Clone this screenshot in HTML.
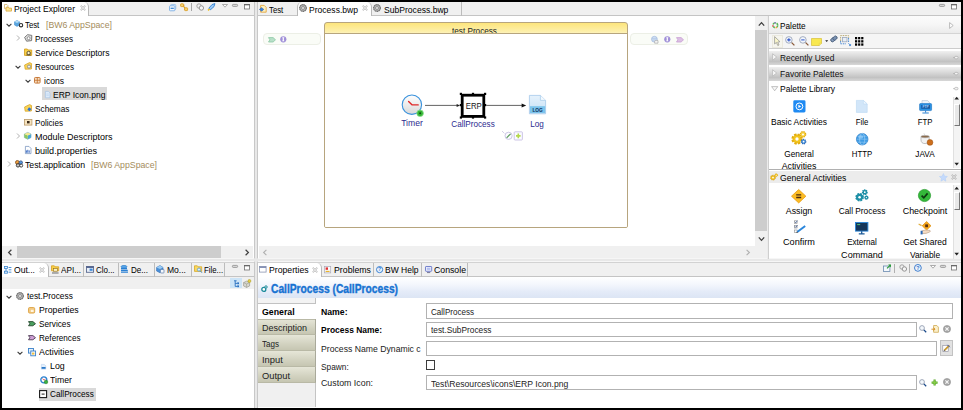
<!DOCTYPE html>
<html><head><meta charset="utf-8"><title>Process.bwp</title>
<style>
html,body{margin:0;padding:0}
body{width:963px;height:410px;overflow:hidden;background:#000;position:relative;font-family:'Liberation Sans',sans-serif;}
#app{position:absolute;left:2px;top:2px;width:959px;height:406px;background:#e8e8e8;overflow:hidden}
#root{position:absolute;left:-2px;top:-2px;width:963px;height:410px}
.b{position:absolute;box-sizing:border-box}
.t{position:absolute;white-space:nowrap;line-height:12px;height:12px;font-size:9.5px}
svg{position:absolute;overflow:visible}
.tabbar{background:#f0f0f0;border-bottom:1px solid #c4c4c4}
.tab{background:#fff;border-right:1px solid #b8b8b8;border-top-right-radius:5px}
.sep{background:#bcbcbc;width:1px}
.fld{background:#fff;border:1px solid #b2b2b2}
.sel{background:#d9d9d9}
.sb{background:#f0f0f0}
.th{background:#cdcdcd}
.stab{left:258px;width:58px;height:16px;border-bottom:1px solid #b9b9a6;border-right:1px solid #a9a99a;background:linear-gradient(#e6e6d8,#d2d2c0 60%,#c6c6b2)}
</style></head><body><div id="app"><div id="root">
<div class="b " style="left:2px;top:2px;width:253.00px;height:257.00px;background:#fff;border-right:1px solid #c8c8c8;border-bottom:1px solid #f6f6f6"></div>
<div class="b tabbar" style="left:2px;top:2px;width:252.00px;height:14.00px;"></div>
<div class="b tab" style="left:2px;top:2px;width:87.00px;height:14.00px;"></div>
<div class="b sb" style="left:2px;top:246px;width:251.00px;height:12.00px;"></div>
<div class="b th" style="left:17px;top:246px;width:204.00px;height:12.00px;"></div>
<div class="b " style="left:2px;top:261px;width:253.00px;height:147.00px;background:#fff;border-right:1px solid #c8c8c8;border-top:1px solid #f6f6f6"></div>
<div class="b " style="left:2px;top:262px;width:252.00px;height:1.00px;background:#d2d2d2"></div>
<div class="b tabbar" style="left:2px;top:263px;width:252.00px;height:14.00px;"></div>
<div class="b tab" style="left:2px;top:263px;width:47.00px;height:14.00px;"></div>
<div class="b sep" style="left:82.6px;top:263px;width:1.00px;height:13.50px;"></div>
<div class="b sep" style="left:118.1px;top:263px;width:1.00px;height:13.50px;"></div>
<div class="b sep" style="left:154px;top:263px;width:1.00px;height:13.50px;"></div>
<div class="b sep" style="left:191px;top:263px;width:1.00px;height:13.50px;"></div>
<div class="b sep" style="left:224.2px;top:263px;width:1.00px;height:13.50px;"></div>
<div class="b " style="left:2px;top:277px;width:252.00px;height:11.50px;background:#f0f0f0"></div>
<div class="b " style="left:230px;top:278px;width:11.50px;height:10.00px;background:#cce4f7"></div>
<div class="b " style="left:257px;top:2px;width:704.00px;height:257.00px;background:#fff;border-left:1px solid #c8c8c8;border-bottom:1px solid #f6f6f6"></div>
<div class="b tabbar" style="left:258px;top:2px;width:703.00px;height:14.00px;"></div>
<div class="b tab" style="left:297px;top:2px;width:75.00px;height:14.00px;border-left:1px solid #b8b8b8;border-top-left-radius:5px"></div>
<div class="b sep" style="left:460.9px;top:2px;width:1.00px;height:13.50px;"></div>
<div class="b sb" style="left:755px;top:16px;width:12.00px;height:230.00px;"></div>
<div class="b th" style="left:755px;top:30px;width:12.00px;height:200.60px;"></div>
<div class="b sb" style="left:259px;top:246px;width:508.00px;height:12.00px;"></div>
<div class="b " style="left:767px;top:16px;width:2.00px;height:243.00px;background:#ececec;border-right:1px solid #cfcfcf"></div>
<div class="b " style="left:257px;top:261px;width:704.00px;height:147.00px;background:#fff;border-left:1px solid #c8c8c8;border-top:1px solid #f6f6f6"></div>
<div class="b " style="left:258px;top:262px;width:703.00px;height:1.00px;background:#d2d2d2"></div>
<div class="b tabbar" style="left:258px;top:263px;width:703.00px;height:13.50px;"></div>
<div class="b tab" style="left:258px;top:263px;width:64.00px;height:13.50px;"></div>
<div class="b sep" style="left:372.6px;top:263px;width:1.00px;height:13.50px;"></div>
<div class="b sep" style="left:420.9px;top:263px;width:1.00px;height:13.50px;"></div>
<div class="b sep" style="left:466.8px;top:263px;width:1.00px;height:13.50px;"></div>
<div class="b " style="left:258px;top:277px;width:703.00px;height:21.00px;background:linear-gradient(#ffffff,#f4f7fd 35%,#e4ebf8 70%,#dce5f4)"></div>
<span class="t" style="top:3.30px;font-size:9.5px;color:#000;left:14.00px;transform:scaleX(0.9025);transform-origin:0 50%;">Project Explorer</span>
<div class="b sel" style="left:41.8px;top:87.2px;width:65.10px;height:13.00px;"></div>
<span class="t" style="top:18.70px;font-size:9.5px;color:#000;left:25.30px;transform:scaleX(0.8200);transform-origin:0 50%;">Test</span>
<span class="t" style="top:32.70px;font-size:9.5px;color:#000;left:34.70px;transform:scaleX(0.8566);transform-origin:0 50%;">Processes</span>
<span class="t" style="top:46.70px;font-size:9.5px;color:#000;left:34.70px;transform:scaleX(0.9046);transform-origin:0 50%;">Service Descriptors</span>
<span class="t" style="top:60.70px;font-size:9.5px;color:#000;left:34.70px;transform:scaleX(0.8586);transform-origin:0 50%;">Resources</span>
<span class="t" style="top:74.70px;font-size:9.5px;color:#000;left:44.00px;transform:scaleX(0.9014);transform-origin:0 50%;">icons</span>
<span class="t" style="top:88.50px;font-size:9.5px;color:#000;left:53.00px;transform:scaleX(0.8964);transform-origin:0 50%;">ERP Icon.png</span>
<span class="t" style="top:102.70px;font-size:9.5px;color:#000;left:34.70px;transform:scaleX(0.8710);transform-origin:0 50%;">Schemas</span>
<span class="t" style="top:116.70px;font-size:9.5px;color:#000;left:34.70px;transform:scaleX(0.8550);transform-origin:0 50%;">Policies</span>
<span class="t" style="top:130.70px;font-size:9.5px;color:#000;left:34.70px;transform:scaleX(0.9469);transform-origin:0 50%;">Module Descriptors</span>
<span class="t" style="top:144.70px;font-size:9.5px;color:#000;left:34.70px;transform:scaleX(0.9543);transform-origin:0 50%;">build.properties</span>
<span class="t" style="top:158.70px;font-size:9.5px;color:#000;left:24.90px;transform:scaleX(0.9162);transform-origin:0 50%;">Test.application</span>
<span class="t" style="top:18.70px;font-size:9.5px;color:#a48c5c;left:45.80px;transform:scaleX(0.9189);transform-origin:0 50%;">[BW6 AppSpace]</span>
<span class="t" style="top:158.70px;font-size:9.5px;color:#a48c5c;left:91.20px;transform:scaleX(0.9189);transform-origin:0 50%;">[BW6 AppSpace]</span>
<span class="t" style="top:264.40px;font-size:9.5px;color:#000;left:13.70px;transform:scaleX(0.9038);transform-origin:0 50%;">Out...</span>
<span class="t" style="top:264.40px;font-size:9.5px;color:#000;left:61.00px;transform:scaleX(0.8608);transform-origin:0 50%;">API...</span>
<span class="t" style="top:264.40px;font-size:9.5px;color:#000;left:96.00px;transform:scaleX(0.8383);transform-origin:0 50%;">Clo...</span>
<span class="t" style="top:264.40px;font-size:9.5px;color:#000;left:131.00px;transform:scaleX(0.8474);transform-origin:0 50%;">De...</span>
<span class="t" style="top:264.40px;font-size:9.5px;color:#000;left:166.80px;transform:scaleX(0.8994);transform-origin:0 50%;">Mo...</span>
<span class="t" style="top:264.40px;font-size:9.5px;color:#000;left:203.70px;transform:scaleX(0.8200);transform-origin:0 50%;">File...</span>
<div class="b sel" style="left:38.5px;top:387.5px;width:57.00px;height:13.00px;"></div>
<span class="t" style="top:290.30px;font-size:9.5px;color:#000;left:27.20px;transform:scaleX(0.8760);transform-origin:0 50%;">test.Process</span>
<span class="t" style="top:304.30px;font-size:9.5px;color:#000;left:38.50px;transform:scaleX(0.9166);transform-origin:0 50%;">Properties</span>
<span class="t" style="top:318.30px;font-size:9.5px;color:#000;left:38.50px;transform:scaleX(0.8645);transform-origin:0 50%;">Services</span>
<span class="t" style="top:332.30px;font-size:9.5px;color:#000;left:38.50px;transform:scaleX(0.8540);transform-origin:0 50%;">References</span>
<span class="t" style="top:346.30px;font-size:9.5px;color:#000;left:38.50px;transform:scaleX(0.9284);transform-origin:0 50%;">Activities</span>
<span class="t" style="top:360.30px;font-size:9.5px;color:#000;left:49.90px;transform:scaleX(0.9269);transform-origin:0 50%;">Log</span>
<span class="t" style="top:374.30px;font-size:9.5px;color:#000;left:49.90px;transform:scaleX(0.9155);transform-origin:0 50%;">Timer</span>
<span class="t" style="top:388.30px;font-size:9.5px;color:#000;left:49.90px;transform:scaleX(0.8641);transform-origin:0 50%;">CallProcess</span>
<span class="t" style="top:3.60px;font-size:9.5px;color:#000;left:268.80px;transform:scaleX(0.8200);transform-origin:0 50%;">Test</span>
<span class="t" style="top:3.60px;font-size:9.5px;color:#000;left:309.00px;transform:scaleX(0.9009);transform-origin:0 50%;">Process.bwp</span>
<span class="t" style="top:3.60px;font-size:9.5px;color:#000;left:383.60px;transform:scaleX(0.9033);transform-origin:0 50%;">SubProcess.bwp</span>
<div class="b" style="left:324px;top:22px;width:304px;height:206px;border:1px solid #b7a57e;border-radius:3px 3px 2px 2px;background:linear-gradient(#fde57c,#fdf0ae 9px,#fff6cc 11px);overflow:hidden">
<span class="t" style="left:127.4px;top:1.6px;font-size:9.5px;transform:scaleX(0.86);transform-origin:0 50%;color:#222">test.Process</span>
<div class="b" style="left:0;top:10px;width:302px;height:194px;background:#fff;border-top:1px solid #b7a57e"></div></div>
<div class="b " style="left:263.2px;top:33.4px;width:58.10px;height:11.60px;background:#fafcf7;border:1px solid #ecefe6;border-radius:4px"></div>
<div class="b " style="left:630.2px;top:33.4px;width:58.30px;height:11.60px;background:#fafcf7;border:1px solid #ecefe6;border-radius:4px"></div>
<span class="t" style="top:117.40px;font-size:9.8px;color:#2b2b8f;left:312.20px;width:200px;text-align:center;transform:scaleX(0.8755);">Timer</span>
<span class="t" style="top:117.60px;font-size:9.8px;color:#2b2b8f;left:372.50px;width:200px;text-align:center;transform:scaleX(0.8320);">CallProcess</span>
<span class="t" style="top:117.70px;font-size:9.8px;color:#2b2b8f;left:437.20px;width:200px;text-align:center;transform:scaleX(0.8313);">Log</span>
<div class="b " style="left:769px;top:16px;width:192.00px;height:18.00px;background:linear-gradient(#fbfbfb,#f6f6f6 50%,#ebebeb);border-bottom:1px solid #d4d4d4"></div>
<div class="b " style="left:769px;top:34px;width:192.00px;height:15.00px;background:#f5f5f5;border-bottom:1px solid #cccccc"></div>
<div class="b " style="left:769px;top:50.5px;width:192.00px;height:14.50px;background:linear-gradient(#f0f0f0,#cfcfcf 55%,#c2c2c2 75%,#d8d8d8)"></div>
<div class="b " style="left:769px;top:66.5px;width:192.00px;height:14.50px;background:linear-gradient(#f0f0f0,#cfcfcf 55%,#c2c2c2 75%,#d8d8d8)"></div>
<div class="b " style="left:769px;top:168.8px;width:192.00px;height:1.00px;background:#b0b0b0"></div>
<div class="b " style="left:769px;top:170.6px;width:192.00px;height:12.90px;background:#ececec"></div>
<span class="t" style="top:20.00px;font-size:9.5px;color:#000;left:780.40px;transform:scaleX(0.8655);transform-origin:0 50%;">Palette</span>
<span class="t" style="top:52.00px;font-size:9.5px;color:#111;left:779.70px;transform:scaleX(0.8789);transform-origin:0 50%;">Recently Used</span>
<span class="t" style="top:68.00px;font-size:9.5px;color:#111;left:779.60px;transform:scaleX(0.8920);transform-origin:0 50%;">Favorite Palettes</span>
<span class="t" style="top:83.20px;font-size:9.5px;color:#000;left:779.60px;transform:scaleX(0.8977);transform-origin:0 50%;">Palette Library</span>
<span class="t" style="top:115.70px;font-size:9.5px;color:#000;left:699.00px;width:200px;text-align:center;transform:scaleX(0.8913);">Basic Activities</span>
<span class="t" style="top:115.70px;font-size:9.5px;color:#000;left:762.20px;width:200px;text-align:center;transform:scaleX(0.8229);">File</span>
<span class="t" style="top:115.70px;font-size:9.5px;color:#000;left:825.00px;width:200px;text-align:center;transform:scaleX(0.8200);">FTP</span>
<span class="t" style="top:147.90px;font-size:9.5px;color:#000;left:699.20px;width:200px;text-align:center;transform:scaleX(0.8725);">General</span>
<div class="b" style="left:769px;top:158px;width:184px;height:10.5px;overflow:hidden">
<span class="t" style="top:1.90px;font-size:9.5px;color:#000;left:-69.90px;width:200px;text-align:center;transform:scaleX(0.9257);">Activities</span>
</div>
<span class="t" style="top:147.90px;font-size:9.5px;color:#000;left:762.20px;width:200px;text-align:center;transform:scaleX(0.8200);">HTTP</span>
<span class="t" style="top:147.90px;font-size:9.5px;color:#000;left:825.30px;width:200px;text-align:center;transform:scaleX(0.8632);">JAVA</span>
<span class="t" style="top:171.80px;font-size:9.5px;color:#000;left:779.60px;transform:scaleX(0.9046);transform-origin:0 50%;">General Activities</span>
<span class="t" style="top:204.90px;font-size:9.5px;color:#000;left:699.20px;width:200px;text-align:center;transform:scaleX(0.9293);">Assign</span>
<span class="t" style="top:204.90px;font-size:9.5px;color:#000;left:762.20px;width:200px;text-align:center;transform:scaleX(0.8757);">Call Process</span>
<span class="t" style="top:204.90px;font-size:9.5px;color:#000;left:825.10px;width:200px;text-align:center;transform:scaleX(0.9383);">Checkpoint</span>
<span class="t" style="top:236.30px;font-size:9.5px;color:#000;left:699.10px;width:200px;text-align:center;transform:scaleX(0.9620);">Confirm</span>
<span class="t" style="top:236.30px;font-size:9.5px;color:#000;left:762.20px;width:200px;text-align:center;transform:scaleX(0.8520);">External</span>
<span class="t" style="top:236.30px;font-size:9.5px;color:#000;left:825.20px;width:200px;text-align:center;transform:scaleX(0.8972);">Get Shared</span>
<div class="b" style="left:769px;top:247px;width:184px;height:11.5px;overflow:hidden">
<span class="t" style="top:2.00px;font-size:9.5px;color:#000;left:-7.10px;width:200px;text-align:center;transform:scaleX(0.9537);">Command</span>
<span class="t" style="top:2.00px;font-size:9.5px;color:#000;left:55.90px;width:200px;text-align:center;transform:scaleX(0.8842);">Variable</span>
</div>
<div class="b " style="left:953px;top:97px;width:7.00px;height:71.00px;background:#f4f4f4;border-left:1px solid #e0e0e0"></div>
<div class="b " style="left:954px;top:104px;width:6.00px;height:22.00px;background:#e8e8e8;border-right:1px solid #777;border-bottom:1px solid #777;border-left:1px solid #fff;border-top:1px solid #fff"></div>
<div class="b " style="left:953px;top:185px;width:7.00px;height:73.50px;background:#f4f4f4;border-left:1px solid #e0e0e0"></div>
<div class="b " style="left:954px;top:192px;width:6.00px;height:18.00px;background:#e8e8e8;border-right:1px solid #777;border-bottom:1px solid #777;border-left:1px solid #fff;border-top:1px solid #fff"></div>
<span class="t" style="top:264.30px;font-size:9.5px;color:#000;left:269.00px;transform:scaleX(0.9143);transform-origin:0 50%;">Properties</span>
<span class="t" style="top:264.30px;font-size:9.5px;color:#000;left:334.00px;transform:scaleX(0.9221);transform-origin:0 50%;">Problems</span>
<span class="t" style="top:264.30px;font-size:9.5px;color:#000;left:385.40px;transform:scaleX(0.8964);transform-origin:0 50%;">BW Help</span>
<span class="t" style="top:264.30px;font-size:9.5px;color:#000;left:434.40px;transform:scaleX(0.9180);transform-origin:0 50%;">Console</span>
<span class="t" style="top:282.60px;font-size:12.2px;color:#1672d2;font-weight:bold;left:271.40px;transform:scaleX(0.8406);transform-origin:0 50%;-webkit-text-stroke:0.4px #1672d2;">CallProcess (CallProcess)</span>
<div class="b " style="left:258px;top:298px;width:58.00px;height:6.00px;border-bottom:1px solid #c2c2c2;border-right:1px solid #c0c0c0;background:#f3f3f3"></div>
<div class="b stab" style="left:258px;top:319px;width:58.00px;height:16.00px;"></div>
<div class="b stab" style="left:258px;top:335px;width:58.00px;height:16.00px;"></div>
<div class="b stab" style="left:258px;top:351px;width:58.00px;height:16.00px;"></div>
<div class="b stab" style="left:258px;top:367px;width:58.00px;height:16.00px;"></div>
<div class="b " style="left:258px;top:319px;width:57.00px;height:1.00px;background:#b9b9a6"></div>
<div class="b " style="left:258px;top:383px;width:58.00px;height:24.00px;background:#f0f0f0;border-right:1px solid #c4c4c4"></div>
<span class="t" style="top:305.80px;font-size:9.5px;color:#000;font-weight:bold;left:262.00px;transform:scaleX(0.9240);transform-origin:0 50%;">General</span>
<span class="t" style="top:321.70px;font-size:9.5px;color:#222;left:262.00px;transform:scaleX(0.9467);transform-origin:0 50%;">Description</span>
<span class="t" style="top:337.70px;font-size:9.5px;color:#222;left:262.00px;transform:scaleX(0.8467);transform-origin:0 50%;">Tags</span>
<span class="t" style="top:353.70px;font-size:9.5px;color:#222;left:262.00px;transform:scaleX(0.9839);transform-origin:0 50%;">Input</span>
<span class="t" style="top:369.70px;font-size:9.5px;color:#222;left:262.00px;transform:scaleX(0.9814);transform-origin:0 50%;">Output</span>
<span class="t" style="top:305.80px;font-size:9.5px;color:#000;font-weight:bold;left:320.70px;transform:scaleX(0.9158);transform-origin:0 50%;">Name:</span>
<span class="t" style="top:323.70px;font-size:9.5px;color:#000;font-weight:bold;left:320.70px;transform:scaleX(0.8885);transform-origin:0 50%;">Process Name:</span>
<span class="t" style="top:343.30px;font-size:9.5px;color:#222;left:320.70px;transform:scaleX(0.9123);transform-origin:0 50%;">Process Name Dynamic c</span>
<span class="t" style="top:360.80px;font-size:9.5px;color:#222;left:320.70px;transform:scaleX(0.8742);transform-origin:0 50%;">Spawn:</span>
<span class="t" style="top:377.00px;font-size:9.5px;color:#222;left:320.70px;transform:scaleX(0.9291);transform-origin:0 50%;">Custom Icon:</span>
<div class="b fld" style="left:426px;top:303px;width:527.00px;height:15.50px;"></div>
<div class="b fld" style="left:426px;top:321.5px;width:491.00px;height:15.50px;"></div>
<div class="b fld" style="left:426px;top:340.5px;width:511.00px;height:15.00px;"></div>
<div class="b " style="left:939.6px;top:340px;width:13.40px;height:16.40px;background:#e2e2e2;border:1px solid #c2c2c2"></div>
<div class="b " style="left:426.2px;top:360.4px;width:9.20px;height:9.20px;background:#fff;border:1px solid #3c3c3c"></div>
<div class="b fld" style="left:426px;top:375.3px;width:490.50px;height:15.20px;"></div>
<span class="t" style="top:305.50px;font-size:9.5px;color:#222;left:430.90px;transform:scaleX(0.8483);transform-origin:0 50%;">CallProcess</span>
<span class="t" style="top:323.80px;font-size:9.5px;color:#222;left:430.90px;transform:scaleX(0.8746);transform-origin:0 50%;">test.SubProcess</span>
<span class="t" style="top:377.50px;font-size:9.5px;color:#222;left:430.90px;transform:scaleX(0.9077);transform-origin:0 50%;">Test\Resources\icons\ERP Icon.png</span>
<svg style="left:4.4px;top:4px" width="8" height="7.6" viewBox="0 0 8 7.6"><path d="M0.5 0.5 h2.4 l1 1 v3.2 h-3.4 z" fill="#fff" stroke="#cfa850" stroke-width="0.7"/><path d="M2 3.2 h2.2 l0.8 0.9 h2.5 v3 h-5.5 z" fill="#fbe392" stroke="#dcaa3c" stroke-width="0.8"/></svg>
<svg style="left:79.5px;top:5.199999999999999px" width="6" height="6" viewBox="0 0 6 6"><path d="M0.8 0.8 L5.2 5.2 M5.2 0.8 L0.8 5.2" fill="none" stroke="#a2a2a2" stroke-width="1.4"/><path d="M0.8 0.8 L5.2 5.2 M5.2 0.8 L0.8 5.2" fill="none" stroke="#fcfcfc" stroke-width="0.7"/></svg>
<svg style="left:169.4px;top:3.6px" width="7.4" height="7.4" viewBox="0 0 7.4 7.4"><rect x="1.6" y="0.5" width="5.2" height="5" rx="0.8" fill="#dcebfa" stroke="#8fbbe8" stroke-width="0.8"/><rect x="0.5" y="1.8" width="5.4" height="5" rx="0.8" fill="#f4f9fe" stroke="#7aaee4" stroke-width="0.9"/><path d="M1.6 4.3 h3.2" stroke="#2f7fd0" stroke-width="1.2"/></svg>
<svg style="left:180px;top:3px" width="8.5" height="8.5" viewBox="0 0 8.5 8.5"><path d="M1.4 2.2 h3 M7 6.2 h-3 M2.6 2.2 L5.8 6.2" fill="none" stroke="#d89a20" stroke-width="1.1"/><rect x="0.6" y="0.8" width="3" height="2.8" rx="0.6" fill="#f6d070" stroke="#d89a20" stroke-width="0.8"/><rect x="4.6" y="4.8" width="3" height="2.8" rx="0.6" fill="#f6d070" stroke="#d89a20" stroke-width="0.8"/></svg>
<div class="b " style="left:190.8px;top:3.2px;width:1.00px;height:7.80px;background:#a6a6a6"></div>
<svg style="left:195.6px;top:3.4px" width="8.5" height="8" viewBox="0 0 8.5 8"><circle cx="3" cy="3" r="2.2" fill="#f0f0f0" stroke="#9a9a9a" stroke-width="0.9"/><circle cx="5.4" cy="5" r="2.2" fill="#f6f6f6" stroke="#8a8a8a" stroke-width="0.9"/></svg>
<svg style="left:206.6px;top:3px" width="9" height="8" viewBox="0 0 9 8"><path d="M7.9 0.6 L5 1.6 L1.8 5.2 L3.4 6.8 L7 3.6 Z" fill="#9ccaf6" stroke="#2f7fd0" stroke-width="0.9"/><path d="M2.6 6 L1 7.4" stroke="#f0c020" stroke-width="1.6"/></svg>
<svg style="left:222.4px;top:3.9000000000000004px" width="6" height="4" viewBox="0 0 6 4"><path d="M0.5 0.5 L5.5 0.5 L3 3.2 Z" fill="#fff" stroke="#8a8a8a" stroke-width="0.7"/></svg>
<svg style="left:232px;top:3.5px" width="6" height="3" viewBox="0 0 6 3"><rect x="0.4" y="0.4" width="5.2" height="2" rx="0.8" fill="#dcdcdc" stroke="#8a8a8a" stroke-width="0.8"/></svg>
<svg style="left:243.7px;top:3.8999999999999995px" width="6" height="5.4" viewBox="0 0 6 5.4"><rect x="0.4" y="0.4" width="5.2" height="4.6" fill="#fff" stroke="#707070" stroke-width="0.8"/><rect x="0.2" y="0.2" width="5.6" height="1.1" fill="#606060"/></svg>
<svg style="left:5.699999999999999px;top:21.6px" width="6" height="6" viewBox="0 0 6 6"><path d="M0.6 1.8 L3 4.2 L5.4 1.8" fill="none" stroke="#3c3c3c" stroke-width="1.1"/></svg>
<svg style="left:15.3px;top:35.4px" width="6" height="6" viewBox="0 0 6 6"><path d="M2 0.5 L4.5 3 L2 5.5" fill="none" stroke="#a8a8a8" stroke-width="0.9"/></svg>
<svg style="left:15.3px;top:63.599999999999994px" width="6" height="6" viewBox="0 0 6 6"><path d="M0.6 1.8 L3 4.2 L5.4 1.8" fill="none" stroke="#3c3c3c" stroke-width="1.1"/></svg>
<svg style="left:24.6px;top:77.6px" width="6" height="6" viewBox="0 0 6 6"><path d="M0.6 1.8 L3 4.2 L5.4 1.8" fill="none" stroke="#3c3c3c" stroke-width="1.1"/></svg>
<svg style="left:15.3px;top:133.4px" width="6" height="6" viewBox="0 0 6 6"><path d="M2 0.5 L4.5 3 L2 5.5" fill="none" stroke="#a8a8a8" stroke-width="0.9"/></svg>
<svg style="left:5.699999999999999px;top:161.4px" width="6" height="6" viewBox="0 0 6 6"><path d="M2 0.5 L4.5 3 L2 5.5" fill="none" stroke="#a8a8a8" stroke-width="0.9"/></svg>
<svg style="left:14px;top:20px" width="12" height="8" viewBox="0 0 12 8"><path d="M0.5 1.8 L3 0.5 L5.6 1.8 V5 L3 6.4 L0.5 5 Z" fill="#5aa6e0" stroke="#3b87c8" stroke-width="0.5"/><path d="M0.5 1.8 L3 3 L5.6 1.8 L3 0.5Z" fill="#b4dcf6"/><circle cx="7" cy="5.2" r="1.7" fill="#fff" stroke="#303030" stroke-width="1.1"/></svg>
<svg style="left:24px;top:34.3px" width="8.5" height="8" viewBox="0 0 8.5 8"><path d="M0.6 3.4 L3.6 0.7 L7.8 1.4 L7.6 6.6 L2.6 7.2 Z" fill="#e4e4e4" stroke="#6a6a6a" stroke-width="0.9"/><circle cx="4.6" cy="4.2" r="1.5" fill="#fff" stroke="#7a7a7a" stroke-width="0.8"/></svg>
<svg style="left:24px;top:48px" width="8.5" height="8" viewBox="0 0 8.5 8"><path d="M0.5 1 h2.8 l0.8 1 h3.6 v5.4 h-7.2 z" fill="#f8d048" stroke="#d09a18" stroke-width="0.8"/><circle cx="4.6" cy="5" r="1.7" fill="#fff5c8" stroke="#4a4030" stroke-width="0.9"/><path d="M2.4 7 h4.6" stroke="#4a4030" stroke-width="0.8"/></svg>
<svg style="left:24px;top:62.3px" width="8.5" height="8" viewBox="0 0 8.5 8"><path d="M0.6 3 L5.6 0.6 L7.6 1.6 L7.4 7 L1.2 7.2 Z" fill="#f8d458" stroke="#d8a428" stroke-width="0.8"/><circle cx="5" cy="4.6" r="1.6" fill="#f0f0f0" stroke="#8a8a8a" stroke-width="0.9"/></svg>
<svg style="left:34.4px;top:77px" width="6.6" height="6.6" viewBox="0 0 6.6 6.6"><rect x="0.5" y="0.5" width="5.6" height="5.6" rx="0.8" fill="#f6dcc0" stroke="#c4722e" stroke-width="0.9"/><path d="M3.3 0.5 v5.6 M0.5 3.3 h5.6" stroke="#c4722e" stroke-width="0.8"/></svg>
<svg style="left:44.6px;top:90.6px" width="5.4" height="7.2" viewBox="0 0 5.4 7.2"><path d="M0.4 0.4 h3 l1.6 1.6 v4.8 h-4.6 z" fill="#dcebfa" stroke="#a8c4e4" stroke-width="0.7"/><path d="M1.4 3 h2.4 M1.4 4.4 h2.4" stroke="#b8d0ec" stroke-width="0.6"/></svg>
<svg style="left:24px;top:104.3px" width="8.5" height="8" viewBox="0 0 8.5 8"><path d="M0.6 3 L5.6 0.6 L7.6 1.6 L7.4 7 L1.2 7.2 Z" fill="#f8d458" stroke="#d8a428" stroke-width="0.8"/><path d="M3.4 5.8 L5 3.2 L7.4 5 L5.6 7.2 Z" fill="#2a70d8"/></svg>
<svg style="left:24px;top:119px" width="8.5" height="6.6" viewBox="0 0 8.5 6.6"><rect x="0.5" y="0.5" width="7.4" height="5.6" fill="#f6e4c0" stroke="#b89868" stroke-width="0.8"/><rect x="3" y="2" width="2.6" height="2.4" fill="#3a2a1a"/></svg>
<svg style="left:24.2px;top:132.4px" width="7.4" height="7.4" viewBox="0 0 7.4 7.4"><path d="M3.7 0.4 L7 2 V5.6 L3.7 7.2 L0.4 5.6 V2 Z" fill="#e8f2c0" stroke="#58a0c0" stroke-width="0.6"/><path d="M3.7 3.6 L7 2 V5.6 L3.7 7.2Z" fill="#4aa4d8"/><path d="M3.7 3.6 L0.4 2 V5.6 L3.7 7.2Z" fill="#8cc860"/><path d="M3.7 0.4 L7 2 L3.7 3.6 L0.4 2Z" fill="#f4e890"/></svg>
<svg style="left:25.2px;top:146px" width="6.4" height="8" viewBox="0 0 6.4 8"><path d="M0.4 0.4 h3.6 l2 2 v5.2 h-5.6 z" fill="#fff" stroke="#6a8ab8" stroke-width="0.7"/><path d="M1.4 6.8 v-2.4 M2.8 6.8 v-3 M4.2 6.8 v-2.4" stroke="#2a60c0" stroke-width="0.9"/></svg>
<svg style="left:14.6px;top:160.2px" width="8.4" height="7.6" viewBox="0 0 8.4 7.6"><circle cx="2.4" cy="2.4" r="1.9" fill="#f0a040" stroke="#7a4a1a" stroke-width="0.8"/><circle cx="5.8" cy="2.6" r="1.7" fill="#5a9ae0" stroke="#2a4a80" stroke-width="0.8"/><circle cx="3" cy="5.4" r="1.7" fill="#c8c8c8" stroke="#303030" stroke-width="0.9"/><circle cx="6.2" cy="5.6" r="1.5" fill="#fff" stroke="#303030" stroke-width="0.9"/></svg>
<svg style="left:7px;top:248.5px" width="6" height="7" viewBox="0 0 6 7"><path d="M4.4 0.8 L1.6 3.5 L4.4 6.2" fill="none" stroke="#404040" stroke-width="1.2"/></svg>
<svg style="left:243.5px;top:248.5px" width="6" height="7" viewBox="0 0 6 7"><path d="M1.6 0.8 L4.4 3.5 L1.6 6.2" fill="none" stroke="#404040" stroke-width="1.2"/></svg>
<svg style="left:3.5px;top:265.8px" width="8" height="8" viewBox="0 0 8 8"><rect x="0.5" y="0.5" width="3" height="2" fill="#e8f2fc" stroke="#3a86d0" stroke-width="0.8"/><rect x="0.5" y="5.2" width="3" height="2" fill="#e8f2fc" stroke="#3a86d0" stroke-width="0.8"/><path d="M2 2.5 v2.7 M4.6 1.5 h2.8 M4.6 3.8 h2.8 M4.6 6.2 h2.8" stroke="#3a86d0" stroke-width="0.9"/></svg>
<svg style="left:39.4px;top:267px" width="6" height="6" viewBox="0 0 6 6"><path d="M0.8 0.8 L5.2 5.2 M5.2 0.8 L0.8 5.2" fill="none" stroke="#a2a2a2" stroke-width="1.4"/><path d="M0.8 0.8 L5.2 5.2 M5.2 0.8 L0.8 5.2" fill="none" stroke="#fcfcfc" stroke-width="0.7"/></svg>
<svg style="left:50.5px;top:264.8px" width="8.5" height="8.8" viewBox="0 0 8.5 8.8"><path d="M0.5 0.8 h2.8 l0.8 1 h3.6 v4 h-7.2 z" fill="#f8d048" stroke="#d8a020" stroke-width="0.8"/><rect x="2.4" y="3.6" width="4" height="2.6" fill="#fff2c0" stroke="#8a6a20" stroke-width="0.6"/><path d="M1 8 h6.6" stroke="#5a5a5a" stroke-width="0.9"/></svg>
<svg style="left:86.4px;top:265.5px" width="8" height="7" viewBox="0 0 8 7"><rect x="0.5" y="0.5" width="7" height="5.8" fill="#e8eef8" stroke="#5a6a90" stroke-width="0.9"/><rect x="0.5" y="0.5" width="7" height="1.4" fill="#4a5a88"/><rect x="3.6" y="2.6" width="3" height="2.2" fill="#3a8ad8"/></svg>
<svg style="left:120.4px;top:265px" width="8.6" height="8.6" viewBox="0 0 8.6 8.6"><ellipse cx="4" cy="1.8" rx="3" ry="1.3" fill="#5aa8ec" stroke="#2278c8" stroke-width="0.7"/><path d="M1 3.6 h6 M1 5.4 h6.8 M1 7.2 h7" stroke="#2a80d4" stroke-width="1.3"/></svg>
<svg style="left:156.2px;top:265px" width="8.6" height="8.6" viewBox="0 0 8.6 8.6"><path d="M0.6 2.4 L4 0.6 L7 2.4 V6 L4 7.8 L0.6 6 Z" fill="#4a90d8" stroke="#2a6ab8" stroke-width="0.6"/><path d="M0.6 2.4 L4 4 L7 2.4 L4 0.6Z" fill="#9cccf4"/><rect x="4.4" y="4.4" width="3.6" height="3.6" rx="0.6" fill="#f4f8fc" stroke="#5a7aa8" stroke-width="0.7"/></svg>
<svg style="left:193.6px;top:265px" width="8.8" height="8.4" viewBox="0 0 8.8 8.4"><path d="M0.5 0.8 h2.8 l0.8 1 h3.6 v4.6 h-7.2 z" fill="#f8d860" stroke="#d8a828" stroke-width="0.8"/><circle cx="5" cy="4.6" r="1.6" fill="#dff0ff" stroke="#4a90c8" stroke-width="0.7"/><path d="M6.2 5.8 L8 7.8" stroke="#4a90c8" stroke-width="1"/></svg>
<svg style="left:232.4px;top:264.5px" width="6" height="3" viewBox="0 0 6 3"><rect x="0.4" y="0.4" width="5.2" height="2" rx="0.8" fill="#dcdcdc" stroke="#8a8a8a" stroke-width="0.8"/></svg>
<svg style="left:244.2px;top:265.1px" width="6" height="5.4" viewBox="0 0 6 5.4"><rect x="0.4" y="0.4" width="5.2" height="4.6" fill="#fff" stroke="#707070" stroke-width="0.8"/><rect x="0.2" y="0.2" width="5.6" height="1.1" fill="#606060"/></svg>
<svg style="left:232.5px;top:279.5px" width="7" height="8" viewBox="0 0 7 8"><path d="M1 0.8 h2.6 M2.2 0.8 v5.6 h2 M2.2 3.4 h2" fill="none" stroke="#2a70c0" stroke-width="0.9"/><rect x="4.2" y="2.4" width="1.8" height="1.8" fill="#2a70c0"/><rect x="4.2" y="5.4" width="1.8" height="1.8" fill="#2a70c0"/></svg>
<svg style="left:243.4px;top:278.6px" width="8.4" height="9" viewBox="0 0 8.4 9"><path d="M0.6 3.6 L3.6 2.2 L6.6 3.6 V7 L3.6 8.4 L0.6 7 Z" fill="#d8d8d0" stroke="#9a9a90" stroke-width="0.7"/><path d="M3.6 5 V8.4 M0.6 3.6 L3.6 5 L6.6 3.6" fill="none" stroke="#9a9a90" stroke-width="0.6"/><circle cx="6.4" cy="2" r="1.5" fill="#e8d040" stroke="#a89820" stroke-width="0.5"/></svg>
<svg style="left:5.5px;top:293.6px" width="6" height="6" viewBox="0 0 6 6"><path d="M0.6 1.8 L3 4.2 L5.4 1.8" fill="none" stroke="#3c3c3c" stroke-width="1.1"/></svg>
<svg style="left:17px;top:349.7px" width="6" height="6" viewBox="0 0 6 6"><path d="M0.6 1.8 L3 4.2 L5.4 1.8" fill="none" stroke="#3c3c3c" stroke-width="1.1"/></svg>
<svg style="left:16.3px;top:292.2px" width="8" height="8" viewBox="0 0 8 8"><circle cx="4" cy="4" r="3.4" fill="#b8b8b8" stroke="#727272" stroke-width="1.1" stroke-dasharray="1.5 0.5"/><circle cx="4" cy="4" r="3" fill="#bcbcbc" stroke="#7c7c7c" stroke-width="0.6"/><circle cx="4" cy="4" r="1.5" fill="#e8e8e8" stroke="#7a7a7a" stroke-width="0.7"/></svg>
<svg style="left:28.4px;top:306.6px" width="7.2" height="6.6" viewBox="0 0 7.2 6.6"><rect x="0.5" y="0.5" width="6.2" height="5.6" rx="1.2" fill="#f2c880" stroke="#dca444" stroke-width="0.9"/><rect x="2.8" y="2.8" width="2.8" height="2.2" fill="#fff6e4"/></svg>
<svg style="left:28px;top:321.4px" width="8" height="5.4" viewBox="0 0 8 5.4"><path d="M0.5 0.6 h4.4 l2.6 2.1 l-2.6 2.1 h-4.4 l1.4 -2.1 z" fill="#4aa060" stroke="#1a3a22" stroke-width="0.8"/></svg>
<svg style="left:28px;top:335.4px" width="8" height="5.4" viewBox="0 0 8 5.4"><path d="M0.5 0.6 h4.4 l2.6 2.1 l-2.6 2.1 h-4.4 l1.4 -2.1 z" fill="#d0a0d8" stroke="#3a2a40" stroke-width="0.8"/></svg>
<svg style="left:28.2px;top:348px" width="8.2" height="8.4" viewBox="0 0 8.2 8.4"><rect x="0.5" y="0.5" width="5" height="4.6" fill="#e4f0fc" stroke="#3a80c8" stroke-width="0.9"/><rect x="2.8" y="3" width="4.8" height="4.8" fill="#f8fbff" stroke="#3a80c8" stroke-width="0.9"/><rect x="4" y="4.6" width="2.4" height="2" fill="#f0c040"/></svg>
<svg style="left:41px;top:363.6px" width="5.2" height="5.6" viewBox="0 0 5.2 5.6"><path d="M0.4 0.4 h2.8 l1.6 1.4 v3.4 h-4.4 z" fill="#e4f0fc" stroke="#b8d0ec" stroke-width="0.6"/><rect x="0.6" y="3" width="4" height="1.8" fill="#2a78c8"/></svg>
<svg style="left:39.8px;top:376.4px" width="8" height="8" viewBox="0 0 8 8"><circle cx="3.8" cy="3.8" r="3" fill="#fff" stroke="#2a80d0" stroke-width="1.3"/><path d="M3.8 3.8 L2.4 2.6 M3.8 3.8 h1.6" stroke="#d03030" stroke-width="0.8"/><circle cx="6" cy="6" r="1.8" fill="#3ab040" stroke="#1a7a20" stroke-width="0.5"/></svg>
<svg style="left:39.4px;top:390px" width="8.2" height="8.2" viewBox="0 0 8.2 8.2"><rect x="0.6" y="0.6" width="7" height="7" fill="#fff" stroke="#1a1a1a" stroke-width="1.1"/><path d="M2.6 4.1 h3" stroke="#1a1a1a" stroke-width="1"/></svg>
<svg style="left:259.2px;top:4.6px" width="8" height="7.6" viewBox="0 0 8 7.6"><path d="M1.6 0.4 h3.6 l2 2 v4.8 h-5.6 z" fill="#fdf0c0" stroke="#e0a030" stroke-width="0.8"/><path d="M0.4 4.4 L2.6 2.6 L4.8 4.4 L2.6 6.2 Z" fill="#3a80d8" stroke="#2a5aa8" stroke-width="0.5"/></svg>
<svg style="left:299.2px;top:4.4px" width="8" height="8" viewBox="0 0 8 8"><circle cx="4" cy="4" r="3.4" fill="#b8b8b8" stroke="#727272" stroke-width="1.1" stroke-dasharray="1.5 0.5"/><circle cx="4" cy="4" r="3" fill="#bcbcbc" stroke="#7c7c7c" stroke-width="0.6"/><circle cx="4" cy="4" r="1.5" fill="#e8e8e8" stroke="#7a7a7a" stroke-width="0.7"/></svg>
<svg style="left:362.2px;top:5.199999999999999px" width="6" height="6" viewBox="0 0 6 6"><path d="M0.8 0.8 L5.2 5.2 M5.2 0.8 L0.8 5.2" fill="none" stroke="#a2a2a2" stroke-width="1.4"/><path d="M0.8 0.8 L5.2 5.2 M5.2 0.8 L0.8 5.2" fill="none" stroke="#fcfcfc" stroke-width="0.7"/></svg>
<svg style="left:373.3px;top:4.4px" width="8" height="8" viewBox="0 0 8 8"><circle cx="4" cy="4" r="3.4" fill="#b8b8b8" stroke="#727272" stroke-width="1.1" stroke-dasharray="1.5 0.5"/><circle cx="4" cy="4" r="3" fill="#bcbcbc" stroke="#7c7c7c" stroke-width="0.6"/><circle cx="4" cy="4" r="1.5" fill="#e8e8e8" stroke="#7a7a7a" stroke-width="0.7"/></svg>
<svg style="left:939.4px;top:3.5px" width="6" height="3" viewBox="0 0 6 3"><rect x="0.4" y="0.4" width="5.2" height="2" rx="0.8" fill="#dcdcdc" stroke="#8a8a8a" stroke-width="0.8"/></svg>
<svg style="left:951px;top:3.8999999999999995px" width="6" height="5.4" viewBox="0 0 6 5.4"><rect x="0.4" y="0.4" width="5.2" height="4.6" fill="#fff" stroke="#707070" stroke-width="0.8"/><rect x="0.2" y="0.2" width="5.6" height="1.1" fill="#606060"/></svg>
<svg style="left:757.5px;top:21px" width="7" height="6" viewBox="0 0 7 6"><path d="M0.8 4.6 L3.5 1.6 L6.2 4.6" fill="none" stroke="#404040" stroke-width="1.3"/></svg>
<svg style="left:757.5px;top:236.3px" width="7" height="6" viewBox="0 0 7 6"><path d="M0.8 1.4 L3.5 4.4 L6.2 1.4" fill="none" stroke="#404040" stroke-width="1.3"/></svg>
<svg style="left:262px;top:248.8px" width="6" height="7" viewBox="0 0 6 7"><path d="M4.4 0.8 L1.6 3.5 L4.4 6.2" fill="none" stroke="#b0b0b0" stroke-width="1.1"/></svg>
<svg style="left:745px;top:248.8px" width="6" height="7" viewBox="0 0 6 7"><path d="M1.6 0.8 L4.4 3.5 L1.6 6.2" fill="none" stroke="#b0b0b0" stroke-width="1.1"/></svg>
<svg style="left:267.6px;top:36.6px" width="8" height="6" viewBox="0 0 8 6"><path d="M0.5 0.6 h4.6 l2.4 2.2 l-2.4 2.2 h-4.6 l1.4 -2.2 z" fill="#b8e0c8" stroke="#8cc8a4" stroke-width="0.8"/></svg>
<svg style="left:280.4px;top:36.2px" width="6.6" height="6.6" viewBox="0 0 6.6 6.6"><circle cx="3.3" cy="3.3" r="3.1" fill="#a090d8"/><path d="M3.3 1.6 v3.4" stroke="#fff" stroke-width="1.2"/><path d="M2.3 1.7 h2 M2.3 4.9 h2" stroke="#fff" stroke-width="0.7"/></svg>
<svg style="left:651.2px;top:35.6px" width="8" height="8" viewBox="0 0 8 8"><circle cx="3.4" cy="3.2" r="2.9" fill="#d0e0f4" stroke="#a0b8dc" stroke-width="0.7"/><path d="M1 2.4 h4.8 M1.2 4 h4.4" stroke="#a0b8dc" stroke-width="0.5"/><path d="M3.6 5.2 q1 -1.6 3.4 -0.6 v2.6 h-3.4 z" fill="#f4f4f4" stroke="#a0a0a0" stroke-width="0.6"/></svg>
<svg style="left:664px;top:36.2px" width="6.6" height="6.6" viewBox="0 0 6.6 6.6"><circle cx="3.3" cy="3.3" r="3.1" fill="#a090d8"/><path d="M3.3 1.6 v3.4" stroke="#fff" stroke-width="1.2"/><path d="M2.3 1.7 h2 M2.3 4.9 h2" stroke="#fff" stroke-width="0.7"/></svg>
<svg style="left:676px;top:36.6px" width="8" height="6" viewBox="0 0 8 6"><path d="M0.5 0.6 h4.6 l2.4 2.2 l-2.4 2.2 h-4.6 l1.4 -2.2 z" fill="#dcc0e4" stroke="#c8a0d4" stroke-width="0.8"/></svg>
<svg style="left:395px;top:88px" width="160" height="60" viewBox="395 88 160 60">
<defs><linearGradient id="gt" x1="0" y1="0" x2="0" y2="1"><stop offset="0" stop-color="#ffffff"/><stop offset="1" stop-color="#d8d8d8"/></linearGradient>
<linearGradient id="gl" x1="0" y1="0" x2="0" y2="1"><stop offset="0" stop-color="#e6f2fc"/><stop offset="1" stop-color="#c4e0f6"/></linearGradient></defs>
<circle cx="411.9" cy="104.7" r="9.7" fill="url(#gt)" stroke="#3a92dc" stroke-width="1.1"/>
<path d="M408.6 101.4 L412.2 104.9 L418.2 104.9" fill="none" stroke="#e02828" stroke-width="1.4" stroke-linejoin="round" stroke-linecap="round"/>
<circle cx="420.1" cy="113.3" r="3.3" fill="#34b434" stroke="#8ee08e" stroke-width="0.8"/><circle cx="420.1" cy="113.3" r="1" fill="#0c500c"/>
<path d="M425 105.4 H458" stroke="#3c3c3c" stroke-width="0.8"/><path d="M456.6 103.9 L460 105.4 L456.6 106.9 Z" fill="#222"/>
<rect x="462.2" y="95.2" width="21.6" height="21.2" fill="#fff" stroke="#000" stroke-width="2.8"/>
<g fill="#000"><rect x="459.8" y="92.8" width="2.2" height="2.2"/><rect x="471.9" y="92.8" width="2.2" height="2.2"/><rect x="484" y="92.8" width="2.2" height="2.2"/>
<rect x="459.8" y="104" width="2.2" height="2.2"/><rect x="484" y="104" width="2.2" height="2.2"/>
<rect x="459.8" y="116.4" width="2.2" height="2.2"/><rect x="471.9" y="116.4" width="2.2" height="2.2"/><rect x="484" y="116.4" width="2.2" height="2.2"/></g>
<text x="473.8" y="108.9" font-family="'Liberation Sans',sans-serif" font-size="9.6" text-anchor="middle" fill="#151515" textLength="16" lengthAdjust="spacingAndGlyphs">ERP</text>
<path d="M486.2 105.4 H523" stroke="#3c3c3c" stroke-width="0.8"/><path d="M521.6 103.4 L526.2 105.4 L521.6 107.4 Z" fill="#111"/>
<path d="M529.4 95.4 h11 l5.2 5 v13.4 h-16.2 z" fill="url(#gl)" stroke="#a4c8ea" stroke-width="0.8"/>
<path d="M540.4 95.4 v5 h5.2" fill="#f4faff" stroke="#a4c8ea" stroke-width="0.7"/>
<rect x="530" y="106.2" width="15.2" height="6.8" fill="#7cc4ec"/>
<text x="537.6" y="111.8" font-family="'Liberation Sans',sans-serif" font-size="5.6" font-weight="bold" text-anchor="middle" fill="#10305c" textLength="10.4" lengthAdjust="spacingAndGlyphs">LOG</text>
<path d="M502 131 L504.4 133.4" stroke="#b8b0d8" stroke-width="0.6"/>
<circle cx="508.6" cy="135.8" r="3.6" fill="#fbfbff" stroke="#c0b8e0" stroke-width="0.8"/><path d="M506.6 137.8 L510.6 133.8" stroke="#5a9a5a" stroke-width="1.1"/>
<rect x="514.2" y="131.8" width="8.2" height="8.2" rx="0.8" fill="#fbfbff" stroke="#c0b8e0" stroke-width="0.8"/><path d="M518.3 133.6 v4.6 M516 135.9 h4.6" stroke="#b4d84c" stroke-width="1.6"/>
</svg>
<svg style="left:771.6px;top:21.5px" width="6.6" height="6.6" viewBox="0 0 6.6 6.6"><circle cx="3.3" cy="3.3" r="2.4" fill="none" stroke="#58b858" stroke-width="1.6" stroke-dasharray="1.9 1.9"/><circle cx="3.3" cy="3.3" r="2.4" fill="none" stroke="#f0a030" stroke-width="1.6" stroke-dasharray="1.2 6.34" stroke-dashoffset="-1.9"/><circle cx="3.3" cy="3.3" r="2.4" fill="none" stroke="#5080e0" stroke-width="1.6" stroke-dasharray="1.2 13.9" stroke-dashoffset="-9.4"/><circle cx="3.3" cy="3.3" r="2.4" fill="none" stroke="#e05050" stroke-width="1.6" stroke-dasharray="1.2 13.9" stroke-dashoffset="-5.6"/></svg>
<svg style="left:949px;top:22px" width="5" height="7" viewBox="0 0 5 7"><path d="M0.6 0.6 L4.2 3.5 L0.6 6.4 Z" fill="#fff" stroke="#a0a0a0" stroke-width="0.7"/></svg>
<div class="b " style="left:772.3px;top:35px;width:10.50px;height:12.60px;background:#f6f5ee;border:1px solid #ebe9de"></div>
<svg style="left:774.2px;top:36px" width="6.6" height="10.6" viewBox="0 0 6.6 10.6"><path d="M0.6 0.6 V8 L2.4 6.4 L3.8 9.6 L5 9 L3.7 6 L6 5.8 Z" fill="#fbf7cc" stroke="#8e8e8e" stroke-width="0.7"/></svg>
<svg style="left:785.4px;top:36.2px" width="10" height="10" viewBox="0 0 10 10"><path d="M6.4 6.4 L9.4 9.4" stroke="#8a5a3a" stroke-width="1.3"/><circle cx="3.9" cy="3.9" r="3.3" fill="#f2f6fc" stroke="#9aa4b8" stroke-width="0.9"/><path d="M2.2 3.9 h3.4 M3.9 2.2 v3.4" stroke="#2a50c8" stroke-width="1.1"/></svg>
<svg style="left:799.1px;top:36.2px" width="10" height="10" viewBox="0 0 10 10"><path d="M6.4 6.4 L9.4 9.4" stroke="#8a5a3a" stroke-width="1.3"/><circle cx="3.9" cy="3.9" r="3.3" fill="#f2f6fc" stroke="#9aa4b8" stroke-width="0.9"/><path d="M2.2 3.9 h3.4" stroke="#3a60d0" stroke-width="1.1"/></svg>
<svg style="left:811.4px;top:37.6px" width="11" height="8" viewBox="0 0 11 8"><path d="M0.5 0.5 h10 v4.8 l-2.2 2.2 h-7.8 z" fill="#f8e850" stroke="#d8c038" stroke-width="0.7"/><path d="M10.5 5.3 h-2.2 v2.2" fill="#fdf6a0" stroke="#d8c038" stroke-width="0.5"/></svg>
<svg style="left:825.2px;top:40px" width="3.4" height="2.4" viewBox="0 0 3.4 2.4"><path d="M0.2 0.3 h3 l-1.5 1.8 z" fill="#222"/></svg>
<svg style="left:830px;top:34.6px" width="8" height="8" viewBox="0 0 8 8"><g transform="rotate(-38 4 4)"><rect x="0.4" y="2.2" width="4.6" height="3.4" rx="1.7" fill="#8aa0c0" stroke="#4a607c" stroke-width="0.9"/><rect x="3" y="2.2" width="4.6" height="3.4" rx="1.7" fill="#7890b0" stroke="#4a607c" stroke-width="0.9"/></g></svg>
<svg style="left:840px;top:34.8px" width="11.4" height="11.4" viewBox="0 0 11.4 11.4"><path d="M0.6 6 V0.6 H8.6 V3" fill="none" stroke="#b0a064" stroke-width="0.9" stroke-dasharray="1.6 0.9"/><path d="M0.6 6 V8.8 H6" fill="none" stroke="#3a80d0" stroke-width="0.9" stroke-dasharray="1.6 0.9"/><path d="M8.6 3 V7" fill="none" stroke="#3a80d0" stroke-width="0.9" stroke-dasharray="1.6 0.9"/><rect x="2.4" y="2.4" width="4.6" height="4.4" fill="#e8eef6" stroke="#9aa8bc" stroke-width="0.8"/><path d="M8.4 8.2 L10.6 10.6 M9 10.6 h1.6 v-1.6" stroke="#3a80d0" stroke-width="0.8" fill="none"/></svg>
<svg style="left:854.8px;top:36.6px" width="8.4" height="8.8" viewBox="0 0 8.4 8.8"><g fill="#000"><rect x="0" y="0" width="2.2" height="2.3"/><rect x="3.1" y="0" width="2.2" height="2.3"/><rect x="6.2" y="0" width="2.2" height="2.3"/><rect x="0" y="3.2" width="2.2" height="2.3"/><rect x="3.1" y="3.2" width="2.2" height="2.3"/><rect x="6.2" y="3.2" width="2.2" height="2.3"/><rect x="0" y="6.4" width="2.2" height="2.3"/><rect x="3.1" y="6.4" width="2.2" height="2.3"/><rect x="6.2" y="6.4" width="2.2" height="2.3"/></g></svg>
<svg style="left:771.6px;top:53px" width="5.4" height="8" viewBox="0 0 5.4 8"><path d="M0.6 0.8 L4.6 4 L0.6 7.2 Z" fill="#f8f8f8" stroke="#b4b4b4" stroke-width="0.7"/></svg>
<svg style="left:771.6px;top:69px" width="5.4" height="8" viewBox="0 0 5.4 8"><path d="M0.6 0.8 L4.6 4 L0.6 7.2 Z" fill="#f8f8f8" stroke="#b4b4b4" stroke-width="0.7"/></svg>
<svg style="left:771px;top:85.8px" width="7.4" height="5.6" viewBox="0 0 7.4 5.6"><path d="M0.6 0.6 H6.8 L3.7 4.8 Z" fill="#f8f8f8" stroke="#a8a8a8" stroke-width="0.7"/></svg>
<svg style="left:953.4px;top:56.0px" width="5.4" height="3.4" viewBox="0 0 5.4 3.4"><rect x="1.6" y="0.4" width="3.4" height="2.4" rx="1" fill="#f4f4f4" stroke="#a4a4a4" stroke-width="0.6"/><path d="M0 1.6 h1.6" stroke="#a4a4a4" stroke-width="0.6"/></svg>
<svg style="left:953.4px;top:72.0px" width="5.4" height="3.4" viewBox="0 0 5.4 3.4"><rect x="1.6" y="0.4" width="3.4" height="2.4" rx="1" fill="#f4f4f4" stroke="#a4a4a4" stroke-width="0.6"/><path d="M0 1.6 h1.6" stroke="#a4a4a4" stroke-width="0.6"/></svg>
<svg style="left:953.4px;top:87.0px" width="5.4" height="3.4" viewBox="0 0 5.4 3.4"><rect x="1.6" y="0.4" width="3.4" height="2.4" rx="1" fill="#f4f4f4" stroke="#a4a4a4" stroke-width="0.6"/><path d="M0 1.6 h1.6" stroke="#a4a4a4" stroke-width="0.6"/></svg>
<svg style="left:792.8px;top:100px" width="12.8" height="12.8" viewBox="0 0 12.8 12.8"><rect x="0.3" y="0.3" width="12.2" height="12.2" rx="1.4" fill="#1f8af2"/><circle cx="6.4" cy="6.4" r="3.4" fill="none" stroke="#fff" stroke-width="1"/><path d="M5.4 4.7 L8.2 6.4 L5.4 8.1 Z" fill="#fff"/></svg>
<svg style="left:856.4px;top:100px" width="11.6" height="12.8" viewBox="0 0 11.6 12.8"><path d="M0.4 0.4 h7 l3.8 3.6 v8.4 h-10.8 z" fill="#d2e6f9" stroke="#b8d6f2" stroke-width="0.6"/><path d="M7.4 0.4 v3.6 h3.8 z" fill="#eef6fe" stroke="#b8d6f2" stroke-width="0.5"/></svg>
<svg style="left:918.6px;top:100px" width="13.2" height="14" viewBox="0 0 13.2 14"><path d="M3 0.6 h5.6 l1.8 1.6 v3 h-7.4 z" fill="#eef4fa" stroke="#b0c0d0" stroke-width="0.6"/><rect x="0.6" y="3.6" width="12" height="7" rx="0.8" fill="#2a92e4" stroke="#1a70c0" stroke-width="0.6"/><rect x="2.2" y="5" width="8.8" height="3.8" fill="#1a5aa0"/><text x="6.6" y="8.2" font-size="3.4" font-weight="bold" fill="#9ad0ff" text-anchor="middle" font-family="'Liberation Sans',sans-serif">FTP</text><path d="M6.6 10.6 v2 M3.4 13 h6.4" stroke="#2a80d0" stroke-width="1"/></svg>
<svg style="left:790.8px;top:131px" width="16" height="14" viewBox="0 0 16 14"><circle cx="6" cy="8" r="4.4" fill="#f2c41c" stroke="#e2ac10" stroke-width="2.42" stroke-dasharray="2.29 1.19"/><circle cx="6" cy="8" r="3.61" fill="#f2c41c"/><circle cx="6" cy="8" r="1.67" fill="#fff"/><circle cx="12" cy="3.4" r="2.6" fill="#f6d040" stroke="#e2ac10" stroke-width="1.43" stroke-dasharray="1.35 0.70"/><circle cx="12" cy="3.4" r="2.13" fill="#f6d040"/><circle cx="12" cy="3.4" r="0.99" fill="#fff"/><circle cx="12.6" cy="10.6" r="2.2" fill="#4a90d8" stroke="#2a6ab8" stroke-width="1.21" stroke-dasharray="1.14 0.59"/><circle cx="12.6" cy="10.6" r="1.80" fill="#4a90d8"/><circle cx="12.6" cy="10.6" r="0.84" fill="#fff"/></svg>
<svg style="left:855.6px;top:133px" width="12.4" height="12.4" viewBox="0 0 12.4 12.4"><circle cx="6.2" cy="6.2" r="5.8" fill="#3d9be4" stroke="#2a7cc8" stroke-width="0.7"/><ellipse cx="6.2" cy="6.2" rx="2.6" ry="5.8" fill="none" stroke="#a8d4f6" stroke-width="0.6"/><path d="M0.6 6.2 h11.2 M1.6 3.2 h9.2 M1.6 9.2 h9.2" stroke="#a8d4f6" stroke-width="0.5"/><ellipse cx="4.8" cy="4" rx="2.6" ry="1.8" fill="#9cd0f8" opacity="0.7"/></svg>
<svg style="left:920px;top:133px" width="13.4" height="13" viewBox="0 0 13.4 13"><path d="M1 3.4 h8.2 v3.4 q0 3.8 -4.1 3.8 q-4.1 0 -4.1 -3.8 z" fill="#f2f2f2" stroke="#a8a8a8" stroke-width="0.7"/><ellipse cx="5.1" cy="3.6" rx="4.1" ry="1.2" fill="#8a6a4a" stroke="#a8a8a8" stroke-width="0.5"/><path d="M4 0.4 q1 1 0 2" stroke="#c0c0c0" stroke-width="0.6" fill="none"/><circle cx="10" cy="9.4" r="2.9" fill="#cc6e1c" stroke="#9a4c0c" stroke-width="0.5"/></svg>
<svg style="left:769.8px;top:173.4px" width="8" height="8" viewBox="0 0 8 8"><circle cx="3" cy="4.6" r="2.2" fill="#f0c020" stroke="#d8a010" stroke-width="1.21" stroke-dasharray="1.14 0.59"/><circle cx="3" cy="4.6" r="1.80" fill="#f0c020"/><circle cx="3" cy="4.6" r="0.84" fill="#fff"/><circle cx="6.2" cy="2.2" r="1.4" fill="#f0c020" stroke="#d8a010" stroke-width="0.77" stroke-dasharray="0.73 0.38"/><circle cx="6.2" cy="2.2" r="1.15" fill="#f0c020"/><circle cx="6.2" cy="2.2" r="0.53" fill="#fff"/></svg>
<svg style="left:939.4px;top:173px" width="8.8" height="8.6" viewBox="0 0 8.8 8.6"><path d="M4.4 0.5 L5.6 3.2 L8.4 3.5 L6.3 5.4 L6.9 8.2 L4.4 6.8 L1.9 8.2 L2.5 5.4 L0.4 3.5 L3.2 3.2 Z" fill="#c4dafc" stroke="#b0ccf6" stroke-width="0.5"/></svg>
<svg style="left:951.2px;top:174.4px" width="6" height="6" viewBox="0 0 6 6"><path d="M0.8 0.8 L5.2 5.2 M5.2 0.8 L0.8 5.2" fill="none" stroke="#a8a8a8" stroke-width="1.6"/><path d="M0.8 0.8 L5.2 5.2 M5.2 0.8 L0.8 5.2" fill="none" stroke="#f4f4f4" stroke-width="0.6"/></svg>
<svg style="left:791.4px;top:188.8px" width="15.4" height="14.4" viewBox="0 0 15.4 14.4"><path d="M7.7 0.5 L14.9 7.2 L7.7 13.9 L0.5 7.2 Z" fill="#fbbc24" stroke="#e89c10" stroke-width="0.8"/><path d="M5.2 5.9 h5 M5.2 8.5 h5" stroke="#4a2a10" stroke-width="1.4"/></svg>
<svg style="left:855.4px;top:189.2px" width="14" height="13" viewBox="0 0 14 13"><circle cx="4.6" cy="8.2" r="3.4" fill="#1d8fa6" stroke="#1d8fa6" stroke-width="1.87" stroke-dasharray="1.77 0.92"/><circle cx="4.6" cy="8.2" r="2.79" fill="#1d8fa6"/><circle cx="4.6" cy="8.2" r="1.29" fill="#fff"/><circle cx="9.8" cy="3.2" r="2.3" fill="#1d8fa6" stroke="#1d8fa6" stroke-width="1.26" stroke-dasharray="1.20 0.62"/><circle cx="9.8" cy="3.2" r="1.89" fill="#1d8fa6"/><circle cx="9.8" cy="3.2" r="0.87" fill="#fff"/><circle cx="11.4" cy="8.6" r="1.8" fill="#1d8fa6" stroke="#1d8fa6" stroke-width="0.99" stroke-dasharray="0.94 0.49"/><circle cx="11.4" cy="8.6" r="1.48" fill="#1d8fa6"/><circle cx="11.4" cy="8.6" r="0.68" fill="#fff"/></svg>
<svg style="left:918px;top:189px" width="13" height="13" viewBox="0 0 13 13"><circle cx="6.5" cy="6.5" r="6.1" fill="#34b83a" stroke="#249a2a" stroke-width="0.7"/><path d="M3.6 6.6 L5.8 8.8 L9.6 4.4" fill="none" stroke="#0c3a10" stroke-width="1.7"/></svg>
<svg style="left:793.6px;top:220px" width="12" height="14.4" viewBox="0 0 12 14.4"><rect x="0.5" y="0.8" width="2.6" height="2.6" fill="#fff" stroke="#8a8a8a" stroke-width="0.6"/><rect x="0.5" y="5.4" width="2.6" height="2.6" fill="#fff" stroke="#8a8a8a" stroke-width="0.6"/><rect x="0.5" y="10" width="2.6" height="2.6" fill="#fff" stroke="#8a8a8a" stroke-width="0.6"/><path d="M0.9 1.8 l0.9 1 l1.6 -2.2 M0.9 6.4 l0.9 1 l1.6 -2.2" stroke="#2a4a8a" stroke-width="0.7" fill="none"/><path d="M3.2 12 L11.2 6" stroke="#2a86dc" stroke-width="2"/><path d="M2 13 l1.2 -1.6 l1 1.2 z" fill="#4a4a4a"/></svg>
<svg style="left:855.4px;top:221.8px" width="13.4" height="12.6" viewBox="0 0 13.4 12.6"><rect x="0.5" y="0.5" width="12.4" height="8.6" fill="#16365a" stroke="#2a86d8" stroke-width="0.9"/><path d="M2.2 2.6 h3" stroke="#58d878" stroke-width="0.9"/><path d="M6.7 9.2 v2 M3.8 11.8 h5.8" stroke="#1c5a98" stroke-width="1.3"/></svg>
<svg style="left:917.8px;top:221.2px" width="14.2" height="14" viewBox="0 0 14.2 14"><path d="M8.6 0.5 L13 4.8 L8.6 9.1 L4.2 4.8 Z" fill="#f6a81e" stroke="#de8c0c" stroke-width="0.7"/><rect x="7.2" y="3.4" width="2.8" height="2.8" fill="#5a3210"/><path d="M0.6 3 l3 1.6" stroke="#e0b040" stroke-width="1.3"/><path d="M3.6 10 q3 -1.6 8.4 -0.6 q1 0.6 -0.2 1.6 q-3.4 2 -8.2 1.6 z" fill="#f4dcc4" stroke="#b89a80" stroke-width="0.6"/><rect x="2.6" y="9.8" width="2" height="3.6" fill="#2a6ab8"/></svg>
<svg style="left:953.8px;top:96.4px" width="5.4" height="4.2" viewBox="0 0 5.4 4.2"><path d="M0.4 3.4 L2.7 0.8 L5 3.4 Z" fill="#222"/></svg>
<svg style="left:953.8px;top:162.4px" width="5.4" height="4.2" viewBox="0 0 5.4 4.2"><path d="M0.4 0.8 L2.7 3.4 L5 0.8 Z" fill="#222"/></svg>
<svg style="left:953.8px;top:186px" width="5.4" height="4.2" viewBox="0 0 5.4 4.2"><path d="M0.4 3.4 L2.7 0.8 L5 3.4 Z" fill="#222"/></svg>
<svg style="left:953.8px;top:252px" width="5.4" height="4.2" viewBox="0 0 5.4 4.2"><path d="M0.4 0.8 L2.7 3.4 L5 0.8 Z" fill="#222"/></svg>
<svg style="left:259.4px;top:266.2px" width="7.6" height="6.6" viewBox="0 0 7.6 6.6"><rect x="0.5" y="0.5" width="6.6" height="5.6" fill="#fff" stroke="#8a94b0" stroke-width="0.8"/><rect x="0.5" y="0.5" width="6.6" height="1.4" fill="#7a88b0"/></svg>
<svg style="left:312.3px;top:266.7px" width="6" height="6" viewBox="0 0 6 6"><path d="M0.8 0.8 L5.2 5.2 M5.2 0.8 L0.8 5.2" fill="none" stroke="#a2a2a2" stroke-width="1.4"/><path d="M0.8 0.8 L5.2 5.2 M5.2 0.8 L0.8 5.2" fill="none" stroke="#fcfcfc" stroke-width="0.7"/></svg>
<svg style="left:324.4px;top:265.6px" width="7.2" height="7.4" viewBox="0 0 7.2 7.4"><rect x="0.5" y="0.5" width="6.2" height="6.4" fill="#fbfbfb" stroke="#a8a8b8" stroke-width="0.7"/><rect x="1.6" y="1.4" width="2.4" height="2.4" fill="#e03030"/><path d="M1.6 5.4 h4" stroke="#e8b020" stroke-width="1.1"/></svg>
<svg style="left:375.8px;top:266px" width="7.2" height="7.2" viewBox="0 0 7.2 7.2"><circle cx="3.6" cy="3.6" r="3.1" fill="#eaf3fc" stroke="#2a78d0" stroke-width="0.9"/><text x="3.6" y="5.4" font-size="5" font-weight="bold" fill="#2a78d0" text-anchor="middle" font-family="'Liberation Sans',sans-serif">?</text></svg>
<svg style="left:424.6px;top:265.6px" width="7.2" height="7.2" viewBox="0 0 7.2 7.2"><rect x="0.5" y="0.5" width="6.2" height="4.8" rx="0.6" fill="#eef0fc" stroke="#5464c0" stroke-width="0.8"/><rect x="1.8" y="1.7" width="3.6" height="2.2" fill="#b4c0f0"/><path d="M2 6.6 h3.2" stroke="#6a6a8a" stroke-width="0.9"/></svg>
<svg style="left:883.2px;top:264.4px" width="9" height="8" viewBox="0 0 9 8"><rect x="0.5" y="2" width="6.4" height="5.4" fill="#f4f8fc" stroke="#6a8ab0" stroke-width="0.8"/><path d="M4 4.4 L7.4 1" stroke="#2a9a3a" stroke-width="1.1"/><path d="M5.2 0.6 h2.8 v2.8 z" fill="#2a9a3a"/></svg>
<div class="b " style="left:894px;top:263.6px;width:1.00px;height:9.00px;background:#b0b0b0"></div>
<svg style="left:899px;top:264.4px" width="8.5" height="8" viewBox="0 0 8.5 8"><circle cx="3" cy="3" r="2.2" fill="#f0f0f0" stroke="#9a9a9a" stroke-width="0.9"/><circle cx="5.4" cy="5" r="2.2" fill="#f6f6f6" stroke="#8a8a8a" stroke-width="0.9"/></svg>
<div class="b " style="left:908.9px;top:263.6px;width:1.00px;height:9.00px;background:#b0b0b0"></div>
<svg style="left:913.8px;top:264.4px" width="7.8" height="7.8" viewBox="0 0 7.8 7.8"><circle cx="3.9" cy="3.9" r="3.4" fill="#eef5fd" stroke="#2a70c8" stroke-width="0.9"/><text x="3.9" y="5.8" font-size="5.4" font-weight="bold" fill="#2a70c8" text-anchor="middle" font-family="'Liberation Sans',sans-serif">?</text></svg>
<svg style="left:929.8px;top:264.8px" width="6" height="4" viewBox="0 0 6 4"><path d="M0.5 0.5 L5.5 0.5 L3 3.2 Z" fill="#fff" stroke="#8a8a8a" stroke-width="0.7"/></svg>
<svg style="left:939.6px;top:264.5px" width="6" height="3" viewBox="0 0 6 3"><rect x="0.4" y="0.4" width="5.2" height="2" rx="0.8" fill="#dcdcdc" stroke="#8a8a8a" stroke-width="0.8"/></svg>
<svg style="left:951px;top:264.90000000000003px" width="6" height="5.4" viewBox="0 0 6 5.4"><rect x="0.4" y="0.4" width="5.2" height="4.6" fill="#fff" stroke="#707070" stroke-width="0.8"/><rect x="0.2" y="0.2" width="5.6" height="1.1" fill="#606060"/></svg>
<svg style="left:260.8px;top:285px" width="7" height="7.4" viewBox="0 0 7 7.4"><circle cx="2.8" cy="4.4" r="2" fill="#fff" stroke="#1a8a9a" stroke-width="1.3"/><circle cx="5" cy="2" r="1.2" fill="#fff" stroke="#1a8a9a" stroke-width="1"/></svg>
<svg style="left:918.8000000000001px;top:325.0px" width="8" height="8" viewBox="0 0 8 8"><path d="M4.6 4.6 L7.2 7.2" stroke="#1a4a8a" stroke-width="1.3"/><circle cx="3" cy="3" r="2.4" fill="#f4f8fc" stroke="#8a94a8" stroke-width="0.8"/></svg>
<svg style="left:942.8px;top:324.8px" width="8" height="8" viewBox="0 0 8 8"><circle cx="4" cy="4" r="3.6" fill="#a4a4a4" stroke="#969696" stroke-width="0.6"/><path d="M2.4 2.4 L5.6 5.6 M5.6 2.4 L2.4 5.6" stroke="#f6f6f6" stroke-width="1.2"/></svg>
<svg style="left:931px;top:325px" width="8" height="8" viewBox="0 0 8 8"><path d="M2.6 0.5 h3.2 l1.6 1.6 v5.2 h-4.8 z" fill="#fbf0cc" stroke="#c8a040" stroke-width="0.7"/><path d="M0.4 4.2 h3.6 M2.6 2.8 L4 4.2 L2.6 5.6" stroke="#d88a18" stroke-width="0.9" fill="none"/></svg>
<svg style="left:942.4px;top:344.2px" width="8.4" height="8.4" viewBox="0 0 8.4 8.4"><rect x="0.8" y="1.4" width="5.4" height="6" fill="#fff" stroke="#8a8a9a" stroke-width="0.6"/><path d="M2.4 6.4 L7.4 1.4" stroke="#c89a30" stroke-width="1.8"/><path d="M1.6 7.2 l0.4 -1.4 l1 1 z" fill="#333"/><path d="M5.4 0.8 l2.4 2.4" stroke="#3a5ac0" stroke-width="1"/></svg>
<svg style="left:918.8000000000001px;top:378.59999999999997px" width="8" height="8" viewBox="0 0 8 8"><path d="M4.6 4.6 L7.2 7.2" stroke="#1a4a8a" stroke-width="1.3"/><circle cx="3" cy="3" r="2.4" fill="#f4f8fc" stroke="#8a94a8" stroke-width="0.8"/></svg>
<svg style="left:942.8px;top:378.4px" width="8" height="8" viewBox="0 0 8 8"><circle cx="4" cy="4" r="3.6" fill="#a4a4a4" stroke="#969696" stroke-width="0.6"/><path d="M2.4 2.4 L5.6 5.6 M5.6 2.4 L2.4 5.6" stroke="#f6f6f6" stroke-width="1.2"/></svg>
<svg style="left:931.4px;top:378.8px" width="7.2" height="7.2" viewBox="0 0 7.2 7.2"><path d="M3.6 0.6 v6 M0.6 3.6 h6" stroke="#5aa82a" stroke-width="2.2"/><path d="M3.6 1.2 v4.8 M1.2 3.6 h4.8" stroke="#8ad048" stroke-width="0.9"/></svg>
</div></div></body></html>
